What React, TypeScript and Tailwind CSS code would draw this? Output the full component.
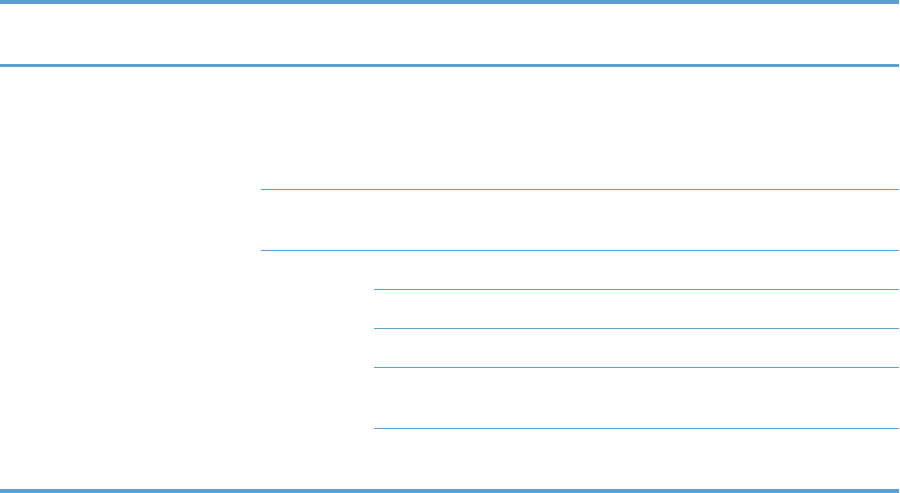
export default function App() {
  const line = "border-[#5aa0d5]";
  return (
    <div className="w-[900px] h-[493px] bg-white overflow-hidden">
      <div className={`w-[899px] flex flex-col border-t-4 border-b-4 ${line}`}>
        <div className={`h-[63px] border-b-[3px] ${line}`} />
        <div className="flex">
          <div className="w-[261px] shrink-0" />
          <div className="flex-1 flex flex-col">
            <div className={`h-[123px] border-b ${line}`} />
            <div className={`h-[61px] border-b ${line}`} />
            <div className="flex">
              <div className="w-[113px] shrink-0" />
              <div className="flex-1 flex flex-col">
                <div className={`h-[39px] border-b ${line}`} />
                <div className={`h-[39px] border-b ${line}`} />
                <div className={`h-[39px] border-b ${line}`} />
                <div className={`h-[61px] border-b ${line}`} />
                <div className="h-[60px]" />
              </div>
            </div>
          </div>
        </div>
      </div>
    </div>
  );
}
